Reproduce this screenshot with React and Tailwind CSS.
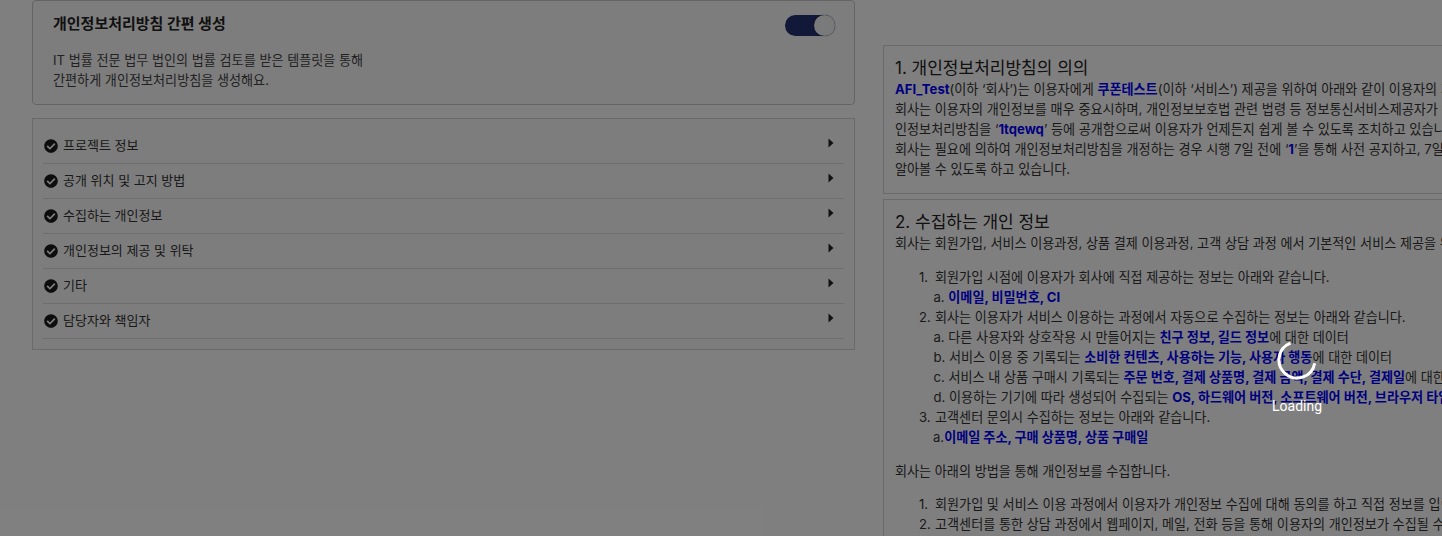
import React from "react";

const font = { fontFamily: '"Inter","Noto Sans CJK KR","Noto Sans",sans-serif' };

const B = ({ children }) => <b className="font-bold text-[#0000ff]">{children}</b>;

const rows = ["프로젝트 정보", "공개 위치 및 고지 방법", "수집하는 개인정보", "개인정보의 제공 및 위탁", "기타", "담당자와 책임자"];

function Check() {
  return (
    <svg width="14" height="14" viewBox="0 0 512 512" className="shrink-0" fill="#1a1a1a">
      <path d="M504 256c0 137-111 248-248 248S8 393 8 256 119 8 256 8s248 111 248 248zM227 387l184-184c6-6 6-16 0-22l-23-23c-6-6-16-6-22 0L216 308l-70-70c-6-6-16-6-22 0l-23 23c-6 6-6 16 0 22l104 104c6 6 16 6 22 0z" />
    </svg>
  );
}

function Row({ label }) {
  return (
    <div className="h-[35px] border-b border-[#dcdcdc] flex items-center pr-[10px] pl-[1px]">
      <Check />
      <span className="ml-[5px] text-[13px] text-[#333]">{label}</span>
      <svg width="6" height="10" viewBox="0 0 6 10" className="ml-auto -mt-[7px]" fill="#222">
        <path d="M0.5 0.5 L5.5 5 L0.5 9.5 Z" />
      </svg>
    </div>
  );
}

function H({ children }) {
  return <h2 className="text-[17px] leading-[24px] font-normal text-[#222]">{children}</h2>;
}

function L({ className = "", children }) {
  return <div className={"h-[20px] " + className}>{children}</div>;
}

function M({ children }) {
  return <span className="inline-block w-[16px]">{children}</span>;
}

export default function App() {
  return (
    <div className="relative w-[1442px] h-[536px] overflow-hidden bg-white" style={font}>
      <div className="flex items-start pl-[32px]">
        <div className="w-[823px] shrink-0">
          <div className="h-[105px] border border-[#c8c8c8] rounded-[4px] bg-[#fbfbfb] px-[20px] pt-[13px]">
            <div className="flex items-start justify-between">
              <h1 className="text-[15px] leading-[20px] font-bold text-[#222]">개인정보처리방침 간편 생성</h1>
              <div className="w-[50px] h-[21px] mt-[1px] -mr-[1px] rounded-full bg-[#223070] flex justify-end">
                <div className="w-[21px] h-[21px] rounded-full bg-[#f4f4f4] shadow-[0_0_2px_rgba(0,0,0,0.4)]" />
              </div>
            </div>
            <p className="mt-[14px] text-[13.1px] leading-[20px] text-[#444]">
              IT 법률 전문 법무 법인의 법률 검토를 받은 템플릿을 통해
              <br />
              간편하게 개인정보처리방침을 생성해요.
            </p>
          </div>
          <div className="mt-[13px] h-[232px] border border-[#d4d4d4] bg-[#fbfbfb] pl-[10px] pr-[10px] pt-[10px]">
            {rows.map((r) => (
              <Row key={r} label={r} />
            ))}
          </div>
        </div>

        <div className="ml-[28px] mt-[45px] w-[800px] shrink-0 text-[13.1px] leading-[20px] text-[#333] whitespace-nowrap">
          <section className="h-[149px] border border-[#d4d4d4] pl-[11px] pt-[10px]">
            <H>1. 개인정보처리방침의 의의</H>
            <L className="-mt-[1px]"><B>AFI_Test</B>(이하 ‘회사’)는 이용자에게 <B>쿠폰테스트</B>(이하 ‘서비스’) 제공을 위하여 아래와 같이 이용자의 개인정보를 수집합니다.</L>
            <L>회사는 이용자의 개인정보를 매우 중요시하며, 개인정보보호법 관련 법령 등 정보통신서비스제공자가 준수하여야 할 사항을 지키고 있습니다.</L>
            <L>인정보처리방침을 ‘<B>1tqewq</B>’ 등에 공개함으로써 이용자가 언제든지 쉽게 볼 수 있도록 조치하고 있습니다.</L>
            <L>회사는 필요에 의하여 개인정보처리방침을 개정하는 경우 시행 7일 전에 ‘<B>1</B>’을 통해 사전 공지하고, 7일 이후 변경된 내용을</L>
            <L>알아볼 수 있도록 하고 있습니다.</L>
          </section>
          <section className="mt-[5px] border border-[#d4d4d4] pl-[11px] pt-[10px] h-[400px]">
            <H>2. 수집하는 개인 정보</H>
            <L className="-mt-[1px]">회사는 회원가입, 서비스 이용과정, 상품 결제 이용과정, 고객 상담 과정 에서 기본적인 서비스 제공을 위해 개인정보를 수집합니다.</L>
            <L className="mt-[14px] pl-[24px]"><M>1.</M>회원가입 시점에 이용자가 회사에 직접 제공하는 정보는 아래와 같습니다.</L>
            <L className="pl-[38.5px]">a. <B>이메일, 비밀번호, CI</B></L>
            <L className="pl-[24px]"><M>2.</M>회사는 이용자가 서비스 이용하는 과정에서 자동으로 수집하는 정보는 아래와 같습니다.</L>
            <L className="pl-[38.5px]">a. 다른 사용자와 상호작용 시 만들어지는 <B>친구 정보, 길드 정보</B>에 대한 데이터</L>
            <L className="pl-[38.5px]">b. 서비스 이용 중 기록되는 <B>소비한 컨텐츠, 사용하는 기능, 사용자 행동</B>에 대한 데이터</L>
            <L className="pl-[38.5px]">c. 서비스 내 상품 구매시 기록되는 <B>주문 번호, 결제 상품명, 결제 금액, 결제 수단, 결제일</B>에 대한 데이터</L>
            <L className="pl-[38.5px]">d. 이용하는 기기에 따라 생성되어 수집되는 <B>OS, 하드웨어 버전, 소프트웨어 버전, 브라우저 타입</B></L>
            <L className="pl-[24px]"><M>3.</M>고객센터 문의시 수집하는 정보는 아래와 같습니다.</L>
            <L className="pl-[38px]">a.<B>이메일 주소, 구매 상품명, 상품 구매일</B></L>
            <L className="mt-[14px]">회사는 아래의 방법을 통해 개인정보를 수집합니다.</L>
            <L className="mt-[13px] pl-[24px]"><M>1.</M>회원가입 및 서비스 이용 과정에서 이용자가 개인정보 수집에 대해 동의를 하고 직접 정보를 입력하는 경우</L>
            <L className="pl-[24px]"><M>2.</M>고객센터를 통한 상담 과정에서 웹페이지, 메일, 전화 등을 통해 이용자의 개인정보가 수집될 수 있습니다.</L>
          </section>
        </div>
      </div>

      <div className="absolute inset-0 bg-black/50">
        <svg width="40" height="40" viewBox="0 0 40 40" fill="none" className="absolute left-[1277px] top-[340px]">
          <path d="M13.5 3.2 A 18 18 0 1 0 37.7 23.2" stroke="#ffffff" strokeWidth="3" />
        </svg>
        <div className="absolute left-[1272px] top-[396px] text-[14px] leading-[20px] font-normal text-white" style={{ fontFamily: "Roboto, sans-serif" }}>
          Loading
        </div>
      </div>
    </div>
  );
}
